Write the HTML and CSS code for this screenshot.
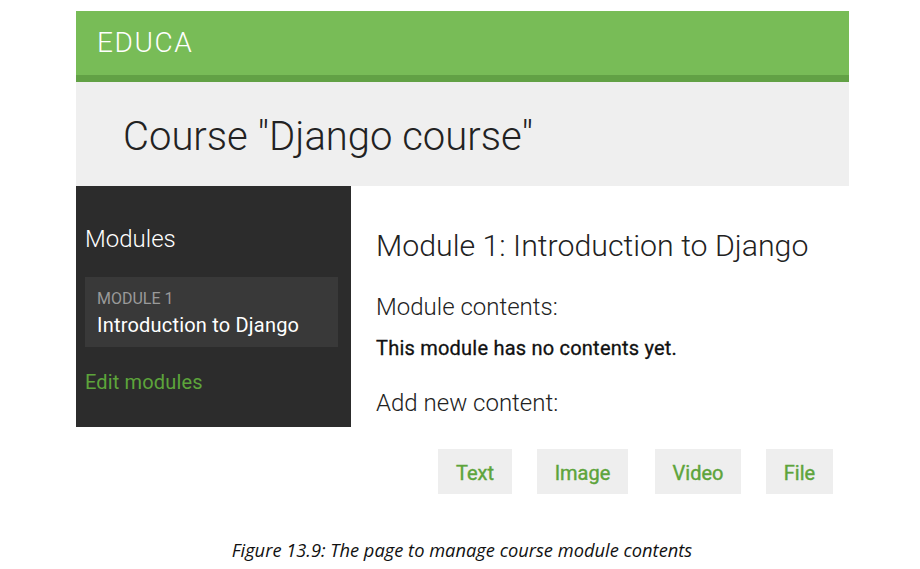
FILE: index.html
```html
<!DOCTYPE html>
<html>
<head>
<meta charset="utf-8">
<link rel="stylesheet" href="styles.css">
</head>
<body>
<div class="page">
  <div class="header"><span class="logo">EDUCA</span></div>
  <div class="title-bar"><h1>Course "Django course"</h1></div>
  <div class="main">
    <aside class="sidebar">
      <h3>Modules</h3>
      <div class="module-item">
        <span class="order">MODULE 1</span>
        <span class="name">Introduction to Django</span>
      </div>
      <a class="edit">Edit modules</a>
    </aside>
    <section class="content">
      <h2>Module 1: Introduction to Django</h2>
      <h3>Module contents:</h3>
      <p class="empty">This module has no contents yet.</p>
      <h3>Add new content:</h3>
    </section>
  </div>
  <div class="buttons">
    <a class="btn btn-text">Text</a>
    <a class="btn btn-image">Image</a>
    <a class="btn btn-video">Video</a>
    <a class="btn btn-file">File</a>
  </div>
</div>
<p class="caption">Figure 13.9: The page to manage course module contents</p>
</body>
</html>
```
FILE: styles.css
```css
html, body { margin: 0; padding: 0; background: #fff; }
body { width: 920px; height: 569px; overflow: hidden; font-family: Roboto, "Liberation Sans", sans-serif; }
.page { margin: 11px 0 0 76px; width: 773px; }
.header { height: 64px; background: #78bc57; border-bottom: 7px solid #62a145; display: flex; align-items: center; padding-left: 21px; }
.logo { color: #fff; font-size: 28px; font-weight: 300; letter-spacing: 1.6px; padding-bottom: 1px; }
.title-bar { height: 104px; background: #efefef; display: flex; align-items: center; padding-left: 47px; }
.title-bar h1 { margin: 0; font-size: 40px; font-weight: 300; color: #222; padding-top: 4px; }
.main { display: flex; }
.sidebar { width: 266px; height: 241px; background: #2c2c2c; padding-left: 9px; box-sizing: content-box; display: flex; flex-direction: column; }
.sidebar h3 { margin: 38px 0 0; font-size: 24px; font-weight: 300; color: #fff; line-height: 30px; }
.module-item { margin-top: 23px; width: 253px; height: 70px; background: #393939; box-sizing: border-box; padding: 12px 0 0 12px; display: flex; flex-direction: column; }
.order { color: #9a9a9a; font-size: 16px; line-height: 20px; }
.name { color: #fff; font-size: 20px; line-height: 24px; margin-top: 4px; letter-spacing: 0.2px; }
.edit { color: #5da43b; font-size: 20px; margin-top: 23px; line-height: 24px; letter-spacing: 0.15px; }
.content { padding-left: 25px; }
.content h2 { margin: 42px 0 0; font-size: 30.3px; font-weight: 300; color: #222; line-height: 36px; }
.content h3 { margin: 28px 0 0; font-size: 24px; font-weight: 300; color: #222; line-height: 30px; }
.content .empty { margin: 14px 0 0; font-size: 20px; font-weight: 400; color: #111; line-height: 24px; letter-spacing: 0.22px; -webkit-text-stroke: 0.3px #111; }
.content .empty + h3 { margin-top: 28px; }
.buttons { display: flex; margin: 22px 0 0 362px; }
.btn { background: #eee; color: #5da43b; font-size: 20px; font-weight: 400; -webkit-text-stroke: 0.4px #5da43b; height: 45px; padding-top: 2px; box-sizing: border-box; display: flex; align-items: center; justify-content: center; }
.btn-text { width: 74px; }
.btn-image { width: 91px; margin-left: 25px; }
.btn-video { width: 86px; margin-left: 27px; }
.btn-file { width: 67px; margin-left: 25px; }
.caption { margin: 43px 0 0; text-align: center; padding-left: 4px; font-family: "Open Sans", sans-serif; font-style: italic; font-size: 18.3px; color: #111; }
```
